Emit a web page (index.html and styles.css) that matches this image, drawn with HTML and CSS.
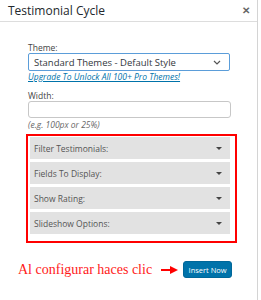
FILE: index.html
```html
<!DOCTYPE html>
<html lang="en">
<head>
    <meta charset="UTF-8">
    <meta name="viewport" content="width=device-width, initial-scale=1.0">
    <title>Testimonial Cycle</title>
    <link rel="stylesheet" href="styles.css">
</head>
<body>

<div class="dialog">
    <div class="dialog-header">
        <span class="dialog-title">Testimonial Cycle</span>
        <span class="dialog-close">&#x2715;</span>
    </div>

    <div class="dialog-body">
        <label class="field-label">Theme:</label>
        <div class="select-box">
            <span>Standard Themes - Default Style</span>
            <svg width="8" height="5" viewBox="0 0 8 5"><path d="M1 1 L4 4 L7 1" fill="none" stroke="#555" stroke-width="1.2"/></svg>
        </div>
        <a class="upgrade-link" href="#">Upgrade To Unlock All 100+ Pro Themes!</a>

        <label class="field-label width-label">Width:</label>
        <div class="text-input"></div>
        <p class="hint">(e.g. 100px or 25%)</p>

        <div class="highlight">
            <div class="panel">Filter Testimonials: <span class="caret"></span></div>
            <div class="panel">Fields To Display: <span class="caret"></span></div>
            <div class="panel">Show Rating: <span class="caret"></span></div>
            <div class="panel">Slideshow Options: <span class="caret"></span></div>
        </div>
    </div>

    <div class="action-row">
        <span class="note">Al configurar haces clic</span>
        <svg class="note-arrow" width="18" height="10" viewBox="0 0 18 10"><path d="M0 5 H10" stroke="#f00" stroke-width="2"/><path d="M9 1 L17 5 L9 9 Z" fill="#f00"/></svg>
        <button class="insert-button">Insert Now</button>
    </div>
</div>

</body>
</html>
```

FILE: styles.css
```css
body {
    margin: 0;
    font-family: "Open Sans", "Noto Sans", sans-serif;
    background-color: #fff;
}
.dialog {
    width: 258px;
    height: 300px;
    box-sizing: border-box;
    border-right: 1px solid #d4d4d4;
}
.dialog-header {
    height: 22px;
    box-sizing: border-box;
    border-bottom: 1px solid #dddddd;
    display: flex;
    align-items: center;
    justify-content: space-between;
    padding: 0 7px 1px 8px;
}
.dialog-title {
    font-size: 12px;
    color: #23282d;
}
.dialog-close {
    font-size: 10px;
    font-weight: bold;
    color: #666;
}
.dialog-body {
    padding: 21px 0 0 28px;
}
.field-label {
    display: block;
    font-size: 8.5px;
    line-height: 10px;
    color: #444;
}
.select-box {
    width: 202px;
    height: 18px;
    box-sizing: border-box;
    border: 1px solid #5b9dd9;
    border-radius: 2px;
    display: flex;
    align-items: center;
    justify-content: space-between;
    padding: 0 8px 0 5px;
    font-size: 9.5px;
    color: #32373c;
}
.upgrade-link {
    display: block;
    font-size: 8.5px;
    line-height: 11px;
    font-style: italic;
    color: #0073aa;
    text-decoration: underline;
}
.width-label {
    margin-top: 9px;
}
.text-input {
    width: 203px;
    height: 17px;
    box-sizing: border-box;
    border: 1px solid #c7c7c7;
    border-radius: 3px;
}
.hint {
    margin: 2px 0 0;
    font-size: 8.5px;
    line-height: 10px;
    font-style: italic;
    color: #666;
}
.highlight {
    width: 211px;
    height: 109px;
    box-sizing: border-box;
    margin: 4px 0 0 -2px;
    border: 2px solid #ff0000;
    padding: 1px 5px 0 2px;
    display: flex;
    flex-direction: column;
    gap: 3px;
}
.panel {
    height: 22px;
    background-color: #e2e2e2;
    display: flex;
    align-items: center;
    justify-content: space-between;
    padding: 0 8px 0 4px;
    font-size: 8.5px;
    color: #555;
}
.caret {
    width: 0;
    height: 0;
    border-left: 3.5px solid transparent;
    border-right: 3.5px solid transparent;
    border-top: 3.5px solid #444;
}
.action-row {
    display: flex;
    align-items: center;
    margin-top: 18px;
    padding-left: 18px;
}
.note {
    font-family: "Liberation Serif", "Times New Roman", serif;
    font-size: 14px;
    color: #ff1a1a;
}
.note-arrow {
    margin-left: 9px;
}
.insert-button {
    margin-left: 4px;
    width: 49px;
    height: 17px;
    padding: 0;
    font-family: "Open Sans", "Noto Sans", sans-serif;
    font-size: 7.5px;
    color: #fff;
    background-color: #0073aa;
    border: 1px solid #006799;
    border-radius: 3px;
}
```
